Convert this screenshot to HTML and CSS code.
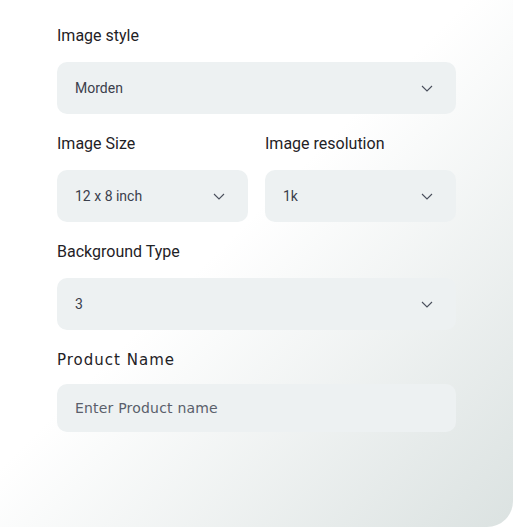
FILE: index.html
```html
<!DOCTYPE html>
<html lang="en">
<head>
<meta charset="UTF-8">
<meta name="viewport" content="width=device-width, initial-scale=1.0">
<title>Image settings</title>
<link rel="stylesheet" href="styles.css">
</head>
<body>

<div class="card">
  <div class="field">
    <div class="label">Image style</div>
    <div class="select">
      <span>Morden</span>
      <svg class="chevron" width="12" height="7" viewBox="0 0 12 7"><path d="M1 1l5 5 5-5" fill="none" stroke="#4a4f5c" stroke-width="1.1"/></svg>
    </div>
  </div>

  <div class="row">
    <div class="field">
      <div class="label">Image Size</div>
      <div class="select">
        <span>12 x 8 inch</span>
        <svg class="chevron" width="12" height="7" viewBox="0 0 12 7"><path d="M1 1l5 5 5-5" fill="none" stroke="#4a4f5c" stroke-width="1.1"/></svg>
      </div>
    </div>
    <div class="field">
      <div class="label">Image resolution</div>
      <div class="select">
        <span>1k</span>
        <svg class="chevron" width="12" height="7" viewBox="0 0 12 7"><path d="M1 1l5 5 5-5" fill="none" stroke="#4a4f5c" stroke-width="1.1"/></svg>
      </div>
    </div>
  </div>

  <div class="field">
    <div class="label">Background Type</div>
    <div class="select">
      <span>3</span>
      <svg class="chevron" width="12" height="7" viewBox="0 0 12 7"><path d="M1 1l5 5 5-5" fill="none" stroke="#4a4f5c" stroke-width="1.1"/></svg>
    </div>
  </div>

  <div class="field alt">
    <div class="label">Product Name</div>
    <div class="input">Enter Product name</div>
  </div>
</div>

</body>
</html>
```

FILE: styles.css
```css
* {
  margin: 0;
  padding: 0;
  box-sizing: border-box;
}

body {
  background: #fff;
  font-family: Roboto, 'Liberation Sans', sans-serif;
  color: #1f2226;
}

/* card */
.card {
  width: 513px;
  height: 527px;
  padding: 26px 57px 0 57px;
  border-radius: 0 0 26px 0;
  background: linear-gradient(135deg, #fff 45%, #dbe2e1 100%);
  display: flex;
  flex-direction: column;
  gap: 20px;
}

.row {
  display: flex;
  gap: 17px;
}
.row .field {
  flex: 1;
}

.label {
  font-size: 16px;
  line-height: 20px;
  margin-bottom: 16px;
}

.select {
  height: 52px;
  border-radius: 10px;
  background: #edf1f2;
  display: flex;
  align-items: center;
  justify-content: space-between;
  padding: 0 23px 0 18px;
  font-size: 14px;
  color: #3b404c;
}

.chevron {
  display: block;
}

/* product name */
.alt .label {
  font-family: 'DejaVu Sans', sans-serif;
  font-size: 15px;
  letter-spacing: 1px;
  margin-bottom: 14px;
}

.input {
  height: 48px;
  border-radius: 10px;
  background: #edf1f2;
  display: flex;
  align-items: center;
  padding: 0 18px;
  font-family: 'DejaVu Sans', sans-serif;
  font-size: 14px;
  letter-spacing: 0.2px;
  color: #5a5f6b;
}
```
